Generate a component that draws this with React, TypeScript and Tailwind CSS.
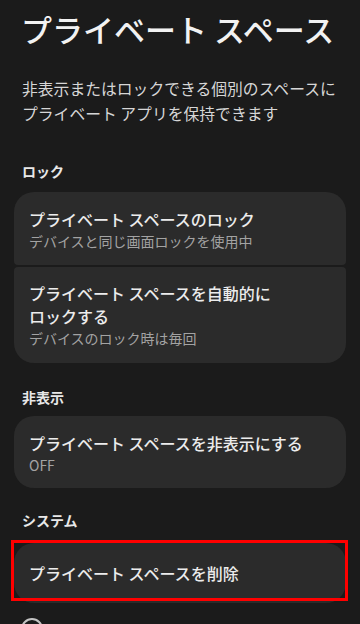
import React from "react";
import { Info } from "lucide-react";

interface Row {
  title: React.ReactNode;
  sub?: string;
}

const font = { fontFamily: '"Noto Sans CJK JP", "Noto Sans", sans-serif' };

function SectionHeader({ label, className }: { label: string; className: string }) {
  return (
    <h2 className={`px-[22px] text-[14px] leading-[20px] font-bold text-[#e8e8e8] ${className}`}>
      {label}
    </h2>
  );
}

function Card({ row, className }: { row: Row; className: string }) {
  return (
    <div className={`bg-[#2b2b2b] px-[15px] ${className}`}>
      <div className="text-[16px] leading-[23px] font-medium text-[#ececec]">{row.title}</div>
      {row.sub && <div className="text-[14px] leading-[21px] text-[#a3a3a3]">{row.sub}</div>}
    </div>
  );
}

export default function App() {
  return (
    <div className="w-[360px] h-[624px] overflow-hidden bg-[#1b1b1b]" style={font}>
      <h1 className="pt-[8px] px-[21px] text-[31px] leading-[42px] font-medium text-[#f2f2f2] whitespace-nowrap">
        プライベート スペース
      </h1>
      <p className="mt-[26px] px-[22px] text-[15.8px] leading-[25px] text-[#d6d6d6] whitespace-nowrap">
        非表示またはロックできる個別のスペースに
        <br />
        プライベート アプリを保持できます
      </p>

      <SectionHeader label="ロック" className="mt-[35px]" />
      <div className="mx-[14px] mt-[11px] flex flex-col gap-[2px]">
        <Card
          row={{ title: "プライベート スペースのロック", sub: "デバイスと同じ画面ロックを使用中" }}
          className="rounded-t-[20px] rounded-b-[4px] pt-[16px] pb-[13px]"
        />
        <Card
          row={{
            title: (
              <>
                プライベート スペースを自動的に
                <br />
                ロックする
              </>
            ),
            sub: "デバイスのロック時は毎回",
          }}
          className="rounded-b-[20px] rounded-t-[4px] pt-[15px] pb-[14px]"
        />
      </div>

      <SectionHeader label="非表示" className="mt-[24px]" />
      <div className="mx-[14px] mt-[9px]">
        <Card
          row={{ title: "プライベート スペースを非表示にする", sub: "OFF" }}
          className="rounded-[20px] pt-[16px] pb-[12px]"
        />
      </div>

      <SectionHeader label="システム" className="mt-[22px]" />
      <div className="relative mx-[14px] mt-[13px]">
        <Card
          row={{ title: "プライベート スペースを削除" }}
          className="rounded-[20px] pt-[19px] pb-[18px]"
        />
        <div className="absolute -left-[3px] -top-[3px] -right-[2px] bottom-[2px] border-[3px] border-[#ff0000]" />
      </div>

      <div className="mt-[14px] pl-[20px]">
        <Info size={24} strokeWidth={2} className="text-[#c4c4c4]" />
      </div>
    </div>
  );
}
